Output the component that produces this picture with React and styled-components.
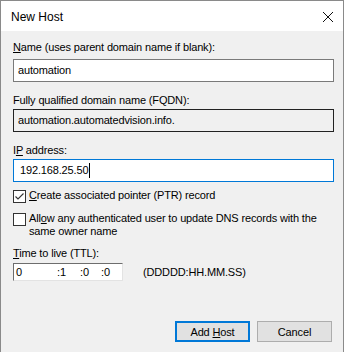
import styled, { createGlobalStyle } from "styled-components";

const GlobalStyle = createGlobalStyle`
  html, body {
    margin: 0;
    padding: 0;
    background: #f0f0f0;
  }
  body {
    font-family: "Liberation Sans", Arial, sans-serif;
    font-size: 11px;
    color: #000;
  }
`;

const App = () => {
  return (
    <>
      <GlobalStyle />
      <Window>
        <TitleBar>
          <Title>New Host</Title>
          <CloseIcon width="12" height="12" viewBox="0 0 12 12">
            <path d="M1 1 L11 11 M11 1 L1 11" stroke="#111" strokeWidth="1" fill="none" />
          </CloseIcon>
        </TitleBar>
        <Body>
          <Label $top={10}>
            <Key>N</Key>ame (uses parent domain name if blank):
          </Label>
          <Field $gap={5}>automation</Field>
          <Label $top={12}>Fully qualified domain name (FQDN):</Label>
          <Field $gap={2} $readOnly>automation.automatedvision.info.</Field>
          <Label $top={12}>
            I<Key>P</Key> address:
          </Label>
          <Field $gap={2} $focused>
            192.168.25.50
            <Caret />
          </Field>

          <CheckRow $top={7}>
            <Box>
              <svg width="11" height="11" viewBox="0 0 11 11">
                <path d="M1.5 5.5 L4 8 L9.5 2.5" stroke="#333" strokeWidth="1.1" fill="none" />
              </svg>
            </Box>
            <CheckText>
              <Key>C</Key>reate associated pointer (PTR) record
            </CheckText>
          </CheckRow>
          <CheckRow $top={9}>
            <Box />
            <CheckText>
              All<Key>o</Key>w any authenticated user to update DNS records with the same owner name
            </CheckText>
          </CheckRow>

          <Label $top={9}>
            <Key>T</Key>ime to live (TTL):
          </Label>
          <TtlRow>
            <TtlBox>
              <TtlPart $w={41}>0</TtlPart>
              <TtlPart $w={23}>:1</TtlPart>
              <TtlPart $w={21}>:0</TtlPart>
              <TtlPart>:0</TtlPart>
            </TtlBox>
            <span>(DDDDD:HH.MM.SS)</span>
          </TtlRow>

          <Buttons>
            <Button $primary>
              Add <Key>H</Key>ost
            </Button>
            <Button>Cancel</Button>
          </Buttons>
        </Body>
      </Window>
    </>
  );
};

export default App;

const Window = styled.div`
  width: 344px;
  height: 352px;
  box-sizing: border-box;
  border: 1px solid #8a8a8a;
  border-bottom: none;
  display: flex;
  flex-direction: column;
  background: #f0f0f0;
`;

const TitleBar = styled.div`
  height: 30px;
  background: #fff;
  display: flex;
  align-items: center;
  justify-content: space-between;
  padding: 0 9px 0 10px;
  flex-shrink: 0;
`;

const Title = styled.span`
  font-size: 12px;
  margin-top: 1px;
`;

const CloseIcon = styled.svg`
  display: block;
  margin-top: 1px;
`;

const Body = styled.div`
  flex: 1;
  display: flex;
  flex-direction: column;
  padding: 0 9px 10px 12px;
  line-height: 13px;
  letter-spacing: -0.15px;
`;

const Key = styled.span`
  text-decoration: underline;
`;

const Label = styled.div`
  margin-top: ${(p) => p.$top}px;
  height: 13px;
  white-space: nowrap;
`;

const Field = styled.div`
  margin-top: ${(p) => p.$gap}px;
  height: 23px;
  box-sizing: border-box;
  display: flex;
  align-items: center;
  background: ${(p) => (p.$readOnly ? "#f0f0f0" : "#fff")};
  border: 1px solid ${(p) => (p.$focused ? "#0078d7" : p.$readOnly ? "#222" : "#7a7a7a")};
  padding-left: ${(p) => (p.$focused ? 6 : 4)}px;
`;

const Caret = styled.span`
  display: inline-block;
  width: 1px;
  height: 15px;
  background: #000;
  margin-left: 1px;
`;

const CheckRow = styled.div`
  margin-top: ${(p) => p.$top}px;
  display: flex;
  align-items: flex-start;
  gap: 3px;
  padding-right: 10px;
`;

const CheckText = styled.div`
  flex: 1;
`;

const Box = styled.div`
  width: 13px;
  height: 13px;
  box-sizing: border-box;
  border: 1px solid #333;
  background: #fff;
  flex-shrink: 0;
  margin-top: 1px;
  display: flex;
  align-items: center;
  justify-content: center;
`;

const TtlRow = styled.div`
  margin-top: 3px;
  display: flex;
  align-items: center;
  gap: 20px;
`;

const TtlBox = styled.div`
  width: 110px;
  height: 18px;
  box-sizing: border-box;
  background: #fff;
  border-top: 1px solid #6d6d6d;
  border-left: 1px solid #6d6d6d;
  border-right: 1px solid #e3e3e3;
  border-bottom: 1px solid #e3e3e3;
  display: flex;
  align-items: center;
  padding-left: 2px;
  padding-top: 1px;
`;

const TtlPart = styled.span`
  width: ${(p) => (p.$w ? `${p.$w}px` : "auto")};
`;

const Buttons = styled.div`
  margin-top: auto;
  display: flex;
  justify-content: flex-end;
  gap: 7px;
  padding-right: 2px;
`;

const Button = styled.button`
  width: 75px;
  height: 21px;
  box-sizing: border-box;
  font-family: "Liberation Sans", Arial, sans-serif;
  font-size: 11px;
  letter-spacing: -0.15px;
  color: #000;
  background: #e1e1e1;
  border: ${(p) => (p.$primary ? "2px solid #0078d7" : "1px solid #adadad")};
  padding: 0;
  cursor: pointer;
`;
